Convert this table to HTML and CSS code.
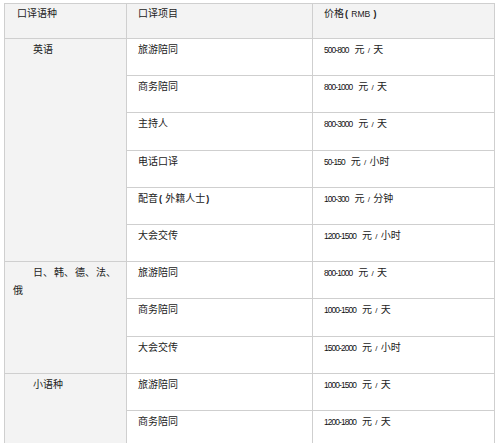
FILE: index.html
```html
<!DOCTYPE html>
<html lang="zh-CN">
<head>
<meta charset="utf-8">
<title>口译价格</title>
<link rel="stylesheet" href="styles.css">
</head>
<body>
<table class="price-table">
  <thead>
    <tr class="head-row">
      <th class="c1">口译语种</th>
      <th class="c2">口译项目</th>
      <th class="c3">价格<span class="paren">(</span> <span class="rmb">RMB</span> <span class="paren">)</span></th>
    </tr>
  </thead>
  <tbody>
    <tr>
      <td class="lang" rowspan="6">英语</td>
      <td class="item">旅游陪同</td>
      <td class="price"><span class="num">500-800</span>元 <span class="sl">/</span> 天</td>
    </tr>
    <tr>
      <td class="item">商务陪同</td>
      <td class="price"><span class="num">800-1000</span>元 <span class="sl">/</span> 天</td>
    </tr>
    <tr>
      <td class="item">主持人</td>
      <td class="price"><span class="num">800-3000</span>元 <span class="sl">/</span> 天</td>
    </tr>
    <tr>
      <td class="item">电话口译</td>
      <td class="price"><span class="num">50-150</span>元 <span class="sl">/</span> 小时</td>
    </tr>
    <tr>
      <td class="item">配音<span class="paren">(</span> 外籍人士<span class="paren">)</span></td>
      <td class="price"><span class="num">100-300</span>元 <span class="sl">/</span> 分钟</td>
    </tr>
    <tr>
      <td class="item">大会交传</td>
      <td class="price"><span class="num">1200-1500</span>元 <span class="sl">/</span> 小时</td>
    </tr>
    <tr>
      <td class="lang multi" rowspan="3">日、<span class="gap"></span>韩、<span class="gap"></span>德、<span class="gap"></span>法、<br>俄</td>
      <td class="item">旅游陪同</td>
      <td class="price"><span class="num">800-1000</span>元 <span class="sl">/</span> 天</td>
    </tr>
    <tr>
      <td class="item">商务陪同</td>
      <td class="price"><span class="num">1000-1500</span>元 <span class="sl">/</span> 天</td>
    </tr>
    <tr>
      <td class="item">大会交传</td>
      <td class="price"><span class="num">1500-2000</span>元 <span class="sl">/</span> 小时</td>
    </tr>
    <tr>
      <td class="lang" rowspan="2">小语种</td>
      <td class="item">旅游陪同</td>
      <td class="price"><span class="num">1000-1500</span>元 <span class="sl">/</span> 天</td>
    </tr>
    <tr>
      <td class="item">商务陪同</td>
      <td class="price"><span class="num">1200-1800</span>元 <span class="sl">/</span> 天</td>
    </tr>
  </tbody>
</table>
</body>
</html>
```

FILE: styles.css
```css
html, body {
  margin: 0;
  padding: 0;
  background: #ffffff;
}

body {
  font-family: "Noto Sans CJK SC", "Noto Sans", sans-serif;
  font-size: 10px;
  color: #222222;
}

.price-table {
  border-collapse: collapse;
  margin: 3px 0 0 4px;
  width: 491px;
  table-layout: fixed;
}

.price-table th,
.price-table td {
  border: 1px solid #cfcfcf;
  vertical-align: top;
  text-align: left;
  font-weight: normal;
  line-height: 18px;
  padding: 1px 0 0 11px;
}

.head-row th {
  background: #f3f3f3;
  height: 34px;
  padding-top: 0;
}

.price-table th.c1 {
  width: 109px;
  padding-left: 12px;
}

.price-table th.c2 {
  width: 174px;
}

.price-table td {
  height: 35.2px;
}

.price-table td.lang {
  background: #f3f3f3;
  padding-left: 8px;
  text-indent: 20px;
}

.gap {
  display: inline-block;
  width: 1px;
}

.num {
  font-family: "Liberation Sans", Arial, sans-serif;
  font-size: 8.4px;
  letter-spacing: -0.9px;
  color: #111111;
  margin-right: 6px;
}

.rmb {
  font-family: "Liberation Sans", Arial, sans-serif;
  font-size: 8.6px;
}

.paren {
  font-family: "Liberation Sans", Arial, sans-serif;
  font-weight: bold;
  font-size: 9px;
  padding: 0 1px;
}

.sl {
  font-family: "Liberation Sans", Arial, sans-serif;
  font-size: 8px;
  padding: 0 1px;
}
```
